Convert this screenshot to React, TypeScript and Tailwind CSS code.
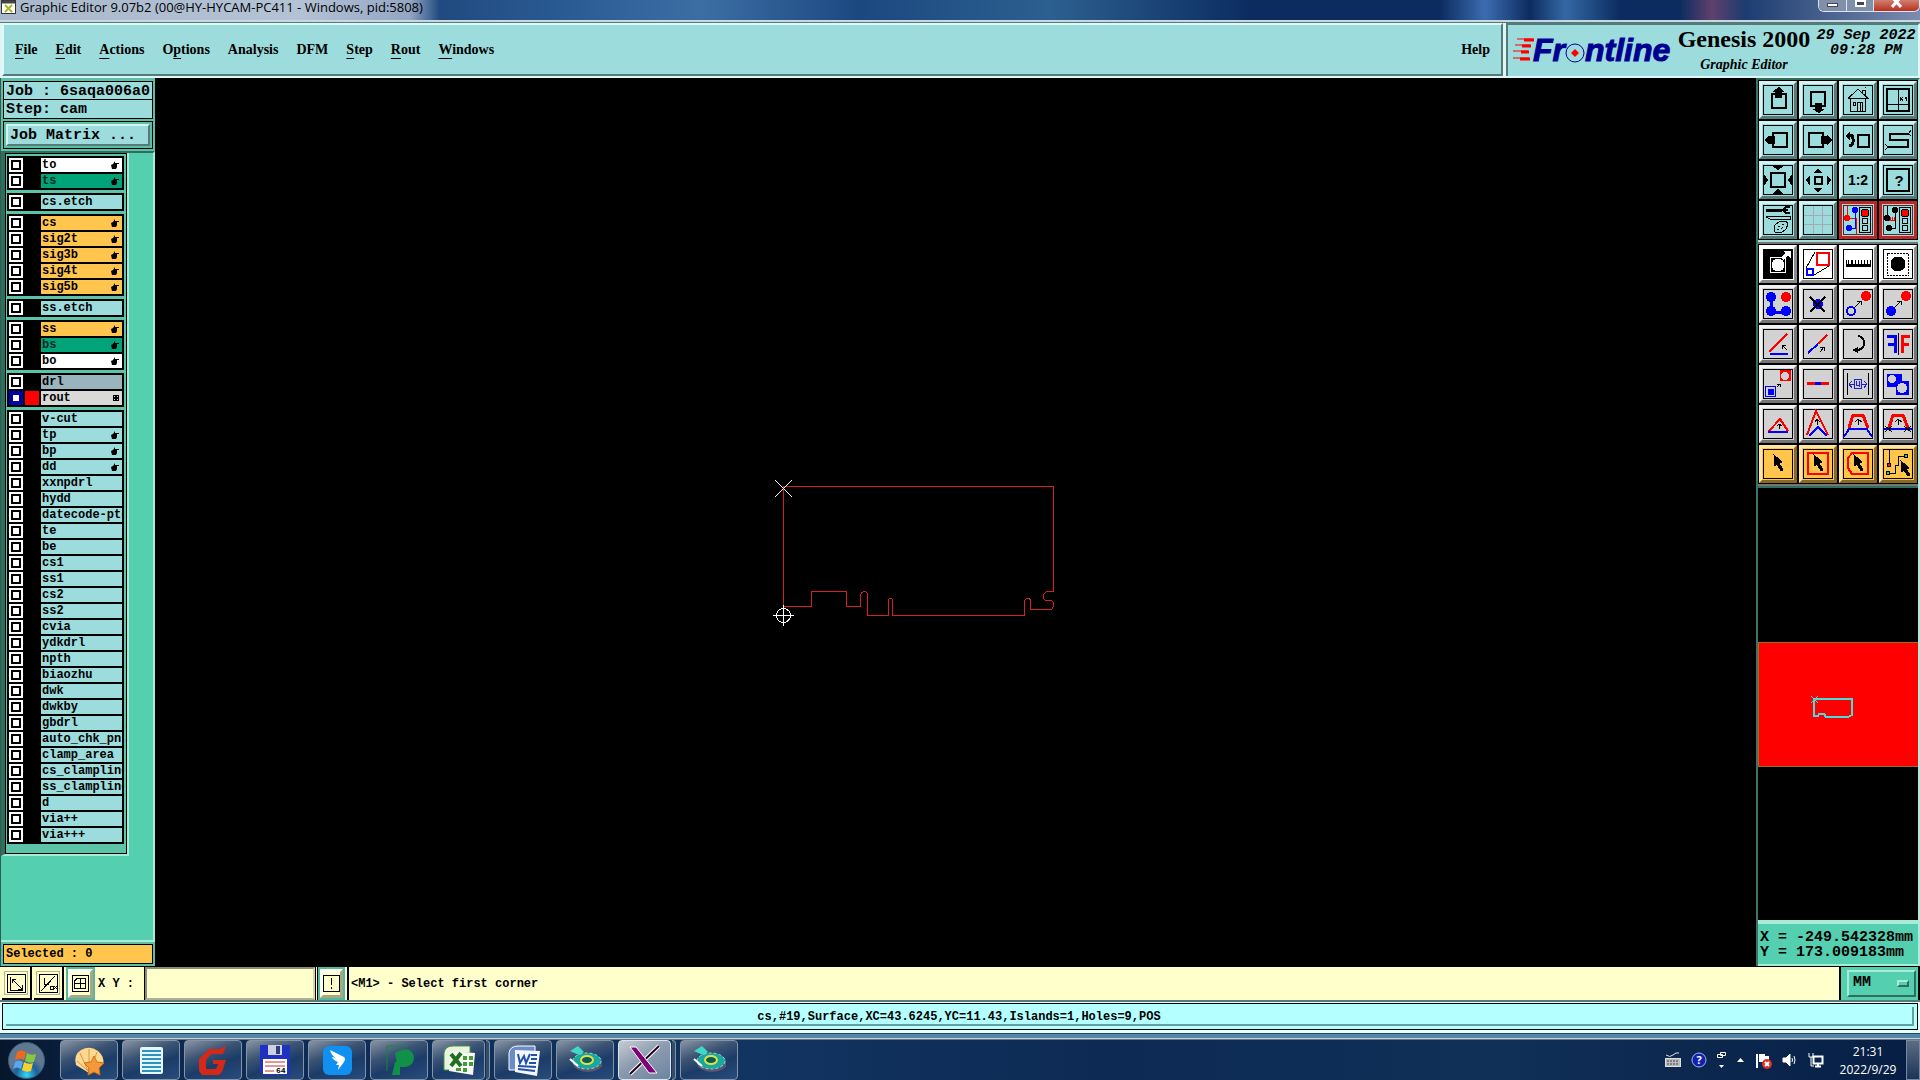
import { ReactNode } from 'react';

type Mark = 'hand' | 'grid';

interface Layer {
  name: string;
  tone: string;
  mark?: Mark;
  active?: boolean;
}

const SKY = 'bg-[#9cdcdc]';
const GOLD = 'bg-[#ffc54c]';
const JADE = 'bg-[#00a478] text-[#06281e]';

const plain = (name: string): Layer => ({ name, tone: SKY });
const handed = (name: string, tone: string): Layer => ({ name, tone, mark: 'hand' });

const layerGroups: Layer[][] = [
  [handed('to', 'bg-white'), handed('ts', JADE)],
  [plain('cs.etch')],
  [handed('cs', GOLD), handed('sig2t', GOLD), handed('sig3b', GOLD), handed('sig4t', GOLD), handed('sig5b', GOLD)],
  [plain('ss.etch')],
  [handed('ss', GOLD), handed('bs', JADE), handed('bo', 'bg-white')],
  [
    { name: 'drl', tone: 'bg-[#9ab4be]' },
    { name: 'rout', tone: 'bg-[#d9d9d9]', mark: 'grid', active: true },
  ],
  [
    plain('v-cut'),
    handed('tp', SKY),
    handed('bp', SKY),
    handed('dd', SKY),
    ...[
      'xxnpdrl', 'hydd', 'datecode-ptc', 'te', 'be', 'cs1', 'ss1', 'cs2', 'ss2', 'cvia', 'ydkdrl', 'npth',
      'biaozhu', 'dwk', 'dwkby', 'gbdrl', 'auto_chk_pnl', 'clamp_area', 'cs_clampline', 'ss_clampline', 'd',
      'via++', 'via+++',
    ].map(plain),
  ],
];

// [before, underlined letter, after]
const menus = [
  ['', 'F', 'ile'],
  ['', 'E', 'dit'],
  ['', 'A', 'ctions'],
  ['O', 'p', 'tions'],
  ['Analysis', '', ''],
  ['DFM', '', ''],
  ['', 'S', 'tep'],
  ['', 'R', 'out'],
  ['', 'W', 'indows'],
];

const RED = '#f00';
const BLUE = '#00f';

interface Tool {
  label: string;
  icon: ReactNode;
  danger?: boolean;
}

const cursor = <path fill="#000" d="M11 6l8 7-3 1 4 7-2 1-4-7-2 2z" />;

const viewTools: Tool[] = [
  { label: 'Pan up', icon: <><rect x="9" y="9" width="14" height="14" strokeWidth="2" /><path fill="#000" stroke="none" d="M16 2l6 5h-3v6h-7V7h-3z" /></> },
  { label: 'Pan down', icon: <><rect x="8" y="7" width="14" height="14" strokeWidth="2" /><path fill="#000" stroke="none" d="M12 18h7v6h3l-6 4-7-4h3z" /></> },
  { label: 'Home', icon: <path d="M5 13.500L15 4l10 9.500H5M7.500 14v12h15V14M10 17h2v3h-2zM14.500 26v-9h5v9M17 18v8M19.500 8V5h3v6M22 3l1-1" /> },
  { label: 'Zoom XY', icon: <><rect x="4" y="4" width="22" height="22" strokeWidth="2" /><path d="M15.500 4v22M4 19.500h22" strokeWidth="1" /><path d="M17 12l3 4M20 12l-3 4M22 12l1 2 1-2M23 14v2" strokeWidth="1" /></> },
  { label: 'Pan left', icon: <><rect x="10" y="8" width="14" height="14" strokeWidth="2" /><path fill="#000" stroke="none" d="M2 15l4-5v1h6v8H6v1z" /></> },
  { label: 'Pan right', icon: <><rect x="6" y="8" width="14" height="14" strokeWidth="2" /><path fill="#000" stroke="none" d="M29 15l-5-5v1h-6v8h6v1z" /></> },
  { label: 'Previous view', icon: <><rect x="15" y="10" width="11" height="12" strokeWidth="2" /><path d="M5 10h2q3 0 3 4v3q0 3-4 4" strokeWidth="3" /><path fill="#000" stroke="none" d="M2 11l5-5v9z" /></> },
  { label: 'Snake', icon: <><path d="M26 9H7v6h18v7H5" strokeWidth="2" /><path d="M26 8l2-3M26 9l2 2M5 22l-3-3M5 22l-3 3" /></> },
  { label: 'Zoom in', icon: <><rect x="8" y="8" width="14" height="14" strokeWidth="2" /><path fill="#000" stroke="none" d="M9 1h12l-6 4zM9 29h12l-6-5zM1 9l4 6-4 6zM29 9l-4 6 4 6z" /></> },
  { label: 'Zoom out', icon: <><rect x="12" y="12" width="7" height="7" strokeWidth="2" /><path fill="#000" stroke="none" d="M10 8l5-4 5 4zM10 23l5 4 5-4zM7 10l-4 5 4 6zM24 10l4 5-4 6z" /></> },
  { label: 'Scale', icon: <text x="15" y="20" textAnchor="middle" stroke="none" fill="#000" className="font-['Liberation_Sans'] text-[14px] font-bold">1:2</text> },
  { label: 'Query', icon: <><rect x="4" y="4" width="22" height="22" strokeWidth="2" /><text x="16" y="21" textAnchor="middle" stroke="none" fill="#000" className="font-['Liberation_Sans'] text-[15px] font-bold">?</text></> },
  { label: 'Setup', icon: <><path d="M3 5h16" strokeWidth="3" /><path d="M27 2h-4l-3 3 3 3h4M25 5h-3" strokeWidth="2" /><path d="M3 12l4-1h20v3H7zM12 20l4-3 7-1 2 3-2 5-5 4-6-1-1-4zM15 21h2M19 19h2M14 24h2M18 24l2-2" /></> },
  { label: 'Grid', icon: <path d="M10.500 1v28M19.500 1v28M1 10.500h28M1 19.500h28" stroke="#a9a9b4" /> },
  {
    label: 'Stop net',
    danger: true,
    icon: <><path d="M4.500 1v12M5 13.500h8.500V29" stroke={RED} /><path d="M12.500 4v19H6" stroke={BLUE} strokeWidth="1" /><circle cx="4" cy="13" r="3" fill={RED} stroke="none" /><circle cx="12" cy="5" r="3" fill={BLUE} stroke="none" /><circle cx="6" cy="23" r="3" fill={BLUE} stroke="none" /><rect x="16.500" y="2.500" width="11" height="25" /><circle cx="22" cy="8" r="4" fill={RED} /><circle cx="22" cy="16" r="3" /><circle cx="22" cy="23" r="3" /></>,
  },
  {
    label: 'Stop drc',
    danger: true,
    icon: <><path d="M4.500 1v12M12.500 4v19H6" strokeWidth="1" /><path d="M5 15.500h7M7 12v3M9 12v3M11 12v3" stroke={RED} /><circle cx="4" cy="13" r="3" fill="#000" stroke="none" /><circle cx="12" cy="5" r="3" fill="#000" stroke="none" /><circle cx="6" cy="23" r="3" fill="#000" stroke="none" /><rect x="16.500" y="2.500" width="11" height="25" /><circle cx="22" cy="8" r="4" fill={RED} /><circle cx="22" cy="16" r="3" /><circle cx="22" cy="23" r="3" /></>,
  },
];

const whiteTools: Tool[] = [
  { label: 'Select feature', icon: <><path fill="#000" d="M1 1h28v28H1z" /><rect x="7.500" y="8.500" width="15" height="15" stroke="#fff" /><circle cx="15" cy="16" r="6" fill="#fff" stroke="#fff" /><path d="M19 10l6-6" stroke="#fff" strokeWidth="4" /><path fill="#fff" stroke="none" d="M20 2h8v8z" /></> },
  { label: 'Scale feature', icon: <><rect x="14" y="4" width="12" height="12" stroke={RED} strokeWidth="2" /><rect x="4" y="20" width="6" height="6" stroke={BLUE} strokeWidth="2" /><path d="M3 19L12 3M11 26l15-9" /></> },
  { label: 'Measure', icon: <path fill="#000" stroke="none" d="M3 18h25v-7h-1v4h-2v-4h-1v4h-2v-4h-1v4h-2v-4h-1v4h-2v-4h-1v4h-2v-4h-1v4h-2v-4h-1v4H9v-4H8v4H6v-4H5v4H4v-4H3z" /> },
  { label: 'Add pad', icon: <><rect x="4.500" y="4.500" width="21" height="22" strokeDasharray="2 1" /><circle cx="15" cy="15" r="7" fill="#000" /></> },
];

const editTools: Tool[] = [
  { label: 'Copy chain', icon: <><path d="M8 8v15h15" stroke={BLUE} strokeWidth="3" /><g stroke="none" fill={BLUE}><circle cx="8" cy="8" r="5" /><circle cx="8" cy="22" r="5" /><circle cx="23" cy="22" r="5" /></g><circle cx="23" cy="8" r="5" fill={RED} stroke="none" /></> },
  { label: 'Delete', icon: <><circle cx="15" cy="15" r="5" fill={BLUE} stroke="none" /><path d="M7 8l15 15M22 8L7 23" strokeWidth="2" /></> },
  { label: 'Move', icon: <><circle cx="23" cy="7" r="5" fill={RED} stroke="none" /><circle cx="8" cy="22" r="4" stroke={BLUE} strokeWidth="2" /><path d="M12 18l6-6M14 12h4v4" /></> },
  { label: 'Copy', icon: <><circle cx="23" cy="7" r="5" fill={RED} stroke="none" /><circle cx="8" cy="22" r="5" fill={BLUE} stroke="none" /><path d="M12 18l6-6M14 12h4v4" /></> },
  { label: 'Rotate line', icon: <><path d="M6 23L24 5" stroke={RED} strokeWidth="2" /><path d="M7 25h18" stroke={BLUE} strokeWidth="2" /><path d="M24 21l-5-5M19 20v-4h4" /></> },
  { label: 'Extend line', icon: <><path d="M5 24l10-9" stroke={BLUE} strokeWidth="2" /><path d="M15 15l9-9" stroke={RED} strokeWidth="2" /><path d="M17 23l4-5M17 18h4v4" /></> },
  { label: 'Rotate', icon: <><path d="M15 7q6 1 6 7t-6 7h-2" strokeWidth="2" /><path fill="#000" stroke="none" d="M9 21l6-3v6z" /></> },
  { label: 'Mirror', icon: <><path d="M4 7h8v17M5 15h7" stroke={BLUE} strokeWidth="3" /><path d="M27 7h-8v17M26 15h-7" stroke={RED} strokeWidth="3" /><path d="M15.500 4v22" /></> },
  { label: 'Resize', icon: <><path fill={RED} stroke="none" d="M17 1h11v11H17z" /><circle cx="22" cy="7" r="4" fill="#d2d2d2" stroke="none" /><rect x="2.500" y="17.500" width="10" height="10" stroke={BLUE} strokeWidth="1" fill="#d2d2d2" /><circle cx="8" cy="23" r="3" fill={BLUE} stroke={BLUE} /><path d="M14 18l3-3M14 15h3v3" /></> },
  { label: 'Break line', icon: <><path d="M4 14.500h22" stroke={RED} strokeWidth="3" /><path d="M12 14.500h6" stroke={BLUE} strokeWidth="3" /></> },
  { label: 'Spacing', icon: <><path d="M4.500 4v22M25.500 4v22" /><path d="M6 15.500h18M9 12l-3 3 3 4M21 12l3 3-3 4" stroke="#22c" /><path d="M11.500 10.500h7v9h-7z" fill="#d2d2d2" stroke="#22c" /><path d="M13.500 12v4h3M16.500 12v6" stroke="#22c" /></> },
  { label: 'Merge', icon: <><path fill={BLUE} stroke="none" d="M4 5h15v7h7v14H13v-8H4z" /><circle cx="9" cy="10" r="4" fill="#d2d2d2" stroke="none" /><circle cx="19" cy="19" r="5" fill="#d2d2d2" stroke="none" /></> },
  { label: 'Corner', icon: <><path d="M6 22L17 10l8 12" stroke={RED} strokeWidth="2" /><path d="M5 23h20" stroke={BLUE} strokeWidth="2" /><path d="M16.500 20v-5M14 17l2-2 3 2" /></> },
  { label: 'Sharp corner', icon: <><path d="M4 26L13 2l12 24" stroke={RED} strokeWidth="2" /><path d="M6 27l9-9 9 9" stroke={BLUE} strokeWidth="2" /><path d="M14.500 16v-6M12 13l2-3 3 3" /></> },
  { label: 'Chamfer', icon: <><path d="M6 19l4-13h10l5 13" stroke={RED} strokeWidth="3" /><path d="M1 28l5-8h18l5 8" stroke={BLUE} strokeWidth="2" /><path d="M15.500 16v-6M12 13l3-3 4 3" /></> },
  { label: 'Trim chamfer', icon: <><path d="M6 19l4-13h10l5 13" stroke={RED} strokeWidth="3" /><path d="M1 20h28" stroke={BLUE} strokeWidth="2" /><path d="M15.500 16v-6M12 13l3-3 4 3M2 17l7 6M9 17l-7 6M21 17l7 6M28 17l-7 6" /></> },
];

const pickTools: Tool[] = [
  { label: 'Pick', icon: cursor },
  { label: 'Pick in frame', icon: <><rect x="5" y="4" width="20" height="21" stroke={RED} strokeWidth="2" />{cursor}</> },
  { label: 'Pick in polygon', icon: <><path d="M9 4h16v21H9l-4-6V9z" stroke={RED} strokeWidth="2" />{cursor}</> },
  { label: 'Pick net', icon: <><path d="M6.500 1v13M6 24.500h6.500v-8h3v-9H23" /><circle cx="6" cy="16" r="2" fill="#d22" /><circle cx="5" cy="24" r="2" fill="#3d3" /><circle cx="23" cy="7" r="2" fill="#3d3" /><path fill="#000" d="M18 12l8 7-3 1 4 6-2 1-4-6-2 2z" /></> },
];

const toneClasses = {
  sky: 'border-t-[#d2f4f4] border-l-[#d2f4f4] border-r-[#547a7a] border-b-[#547a7a] bg-[#9cdcdc]',
  red: 'border-[#b82828] bg-[#9cdcdc]',
  white: 'border-t-white border-l-white border-r-[#8c8c8c] border-b-[#8c8c8c] bg-white',
  grey: 'border-t-[#f2f2f2] border-l-[#f2f2f2] border-r-[#757575] border-b-[#757575] bg-[#d2d2d2]',
  gold: 'border-t-[#ffe6a0] border-l-[#ffe6a0] border-r-[#8a6a20] border-b-[#8a6a20] bg-[#ffc54c]',
};

function ToolGrid({ tools, tone }: { tools: Tool[]; tone: keyof typeof toneClasses }) {
  return (
    <div className="grid grid-cols-4 gap-[2px] bg-black p-px">
      {tools.map((tool) => (
        <button
          key={tool.label}
          aria-label={tool.label}
          className={`flex h-[38px] items-center justify-center border-3 ${toneClasses[tool.danger ? 'red' : tone]}`}
        >
          <svg width="30" height="30" viewBox="0 0 30 30" fill="none" stroke="#000" shapeRendering="crispEdges" className="overflow-visible">
            <rect x="0.500" y="0.500" width="29" height="29" stroke={tool.danger ? '#7c1818' : '#000'} />
            {tool.icon}
          </svg>
        </button>
      ))}
    </div>
  );
}

function LayerMark({ mark }: { mark: Mark }) {
  if (mark === 'grid') {
    return (
      <svg width="6" height="6" viewBox="0 0 6 6" shapeRendering="crispEdges">
        <path d="M0 0h6v6H0z" />
        <path fill="#d9d9d9" d="M1 1h1v1H1zM4 1h1v1H4zM1 4h1v1H1zM4 4h1v1H4z" />
      </svg>
    );
  }
  return (
    <svg width="8" height="8" viewBox="0 0 8 8" fill="#000">
      <path d="M0 4l2-1 2-3v2h4v1H6v3L5 8H1z" />
    </svg>
  );
}

function LayerRow({ layer }: { layer: Layer }) {
  return (
    <label className="flex h-[14px] items-stretch">
      <input
        type="checkbox"
        defaultChecked={layer.active}
        className="size-[14px] shrink-0 appearance-none bg-white shadow-[inset_0_0_0_2px_#fff,inset_0_0_0_4px_#000] checked:shadow-[inset_0_0_0_4px_#0000a8]"
      />
      <span className={`mx-[2px] w-[14px] shrink-0 ${layer.active ? 'bg-[#f00]' : 'bg-black'}`} />
      <span className={`flex min-w-0 flex-1 items-center overflow-hidden pl-px text-[12px] leading-[14px] ${layer.tone}`}>
        <span className="flex-1 whitespace-nowrap">{layer.name}</span>
        {layer.mark && <span className="pr-[3px]"><LayerMark mark={layer.mark} /></span>}
      </span>
    </label>
  );
}

function Sidebar() {
  return (
    <aside className="flex w-[155px] shrink-0 flex-col border-l border-[#2d5c50] bg-[#5cbfa6] px-[2px] pt-[3px]">
      <div className="divide-y divide-black border border-black bg-[#9cdcdc] text-[15px]">
        <p className="h-[18px] overflow-hidden pl-[2px] leading-[19px] whitespace-nowrap">Job : 6saqa006a0</p>
        <p className="h-[18px] pl-[2px] leading-[20px]">Step: cam</p>
      </div>
      <div className="mt-[2px] border border-black p-[2px]">
        <button className="block h-[22px] w-full border-2 border-t-[#d2f4f4] border-r-[#547a7a] border-b-[#547a7a] border-l-[#d2f4f4] bg-[#9cdcdc] pl-[2px] text-left text-[15px] leading-[20px]">
          Job Matrix ...
        </button>
      </div>

      <div className="-mx-[2px] mt-[2px] flex-1 border-t-2 border-r-2 border-b-2 border-t-[#2d6e5c] border-r-[#a8ecd8] border-b-[#a8ecd8] bg-[#54cfb0]">
        <div className="w-[128px] border-r-2 border-b-2 border-l-4 border-r-[#a8ecd8] border-b-[#a8ecd8] border-l-[#2d6e5c]">
          <div className="space-y-[3px] border border-black bg-[#5cc4a8] pt-[2px] pr-[2px] pb-[9px] pl-px">
            {layerGroups.map((group) => (
              <div key={group[0].name} className="space-y-[2px] bg-black p-[2px]">
                {group.map((layer) => (
                  <LayerRow key={layer.name} layer={layer} />
                ))}
              </div>
            ))}
          </div>
        </div>
      </div>

      <p className="my-[2px] h-[20px] border border-black bg-[#ffc54c] pl-[2px] text-[12px] leading-[18px]">Selected : 0</p>
    </aside>
  );
}

function Drawing() {
  return (
    <main className="min-w-0 flex-1 bg-black">
      <svg viewBox="155 78 1601 888" className="h-full w-full" fill="none" shapeRendering="crispEdges">
        <path
          stroke="#d42020"
          d="M783.500 486.500H1053.500V591.500H1047.500Q1043.500 592.500 1043.500 596.500T1047.500 600.500H1051.500Q1053.500 601.500 1053.500 604.500T1051.500 609.500H1030.500V600.500Q1030.500 598.500 1027.500 598.500T1024.500 601.500V615.500H892.500V600.500Q892.500 598.500 890.500 598.500T888.500 600.500V615.500H867.500V594.500Q867.500 591.500 864.500 591.500T860.500 595.500V606.500H846.500V591.500H811.500V606.500H783.500Z"
        />
        <g stroke="#fff">
          <path d="M775 480l17 17M792 480l-17 17" />
          <path d="M773 615.500h21M783.500 605v21" />
          <circle cx="783.500" cy="615.500" r="7" />
        </g>
      </svg>
    </main>
  );
}

function ToolPanel() {
  return (
    <aside className="flex w-[164px] shrink-0 flex-col border-t-2 border-r-2 border-l-2 border-t-[#2d6e5c] border-r-[#b4e8dc] border-l-[#3c7466] bg-black">
      <ToolGrid tools={viewTools} tone="sky" />
      <div className="h-[4px] border-t-2 border-b-2 border-t-[#a8dcd4] border-b-[#757575]" />
      <ToolGrid tools={whiteTools} tone="white" />
      <ToolGrid tools={editTools} tone="grey" />
      <ToolGrid tools={pickTools} tone="gold" />
      <div className="h-[4px] border-t-2 border-b-2 border-t-[#757575] border-b-[#2d6e5c]" />
      <div className="min-h-0 flex-1">
        <svg viewBox="0 0 160 432" className="h-full w-full" fill="none" shapeRendering="crispEdges">
          <rect x="0" y="154" width="160" height="125" fill="#f00" />
          <path d="M0 154.500h160M0 278.500h160M0.500 154v125" stroke="#a07010" />
          <path d="M56 211h38v16l-4 2H68l-2-3h-5l-1 2h-4z" stroke="#48dcdc" strokeWidth="2" />
          <path d="M53 208l7 7M60 208l-7 7" stroke="#48dcdc" />
        </svg>
      </div>
      <dl className="h-[46px] border-t-4 border-b-2 border-t-[#a8ecd8] border-b-[#a8ecd8] bg-[#54cfb0] pt-[6px] pl-[2px] text-[15px] leading-[15px] whitespace-pre">
        <div className="flex"><dt>X = </dt><dd>-249.542328mm</dd></div>
        <div className="flex"><dt>Y = </dt><dd>173.009183mm</dd></div>
      </dl>
    </aside>
  );
}

function Logo() {
  return (
    <svg width="162" height="34" viewBox="0 0 162 34" aria-label="Frontline">
      <g fill="none" stroke="#f00" strokeWidth="2">
        <path d="M5 6h16M3 12h15M1 18h15M1 25h16" strokeWidth="1" />
        <path d="M12 7h10M10 13h9M9 19h8M8 26h10" strokeWidth="3" />
      </g>
      <g fill="#000090" stroke="#000090" className="font-['Liberation_Sans'] text-[32px] font-bold italic">
        <text x="21" y="28">Fr</text>
        <text x="73" y="28">ntline</text>
      </g>
      <circle cx="63" cy="20" r="9" fill="#9cdcdc" stroke="#000096" strokeWidth="1" />
      <path d="M63 16l4 4-4 4-4-4z" fill="#f00" />
    </svg>
  );
}

function Header() {
  return (
    <header className="flex h-[55px] shrink-0 bg-[#dff6f6] pb-[2px]">
      <nav className="ml-[2px] flex flex-1 items-center gap-[18px] border-2 border-t-[#dff8f8] border-r-[#547a7a] border-b-[#547a7a] border-l-[#dff8f8] bg-[#9cdcdc] px-[11px] font-['Liberation_Serif'] text-[14px] font-bold">
        {menus.map(([before, key, after]) => (
          <button key={before + key + after}>
            {before}
            <span className="underline underline-offset-4">{key}</span>
            {after}
          </button>
        ))}
        <button className="ml-auto">Help</button>
      </nav>
      <div className="ml-[3px] flex w-[414px] shrink-0 border-t-2 border-r-2 border-l-2 border-t-[#547a7a] border-r-[#dff8f8] border-l-[#547a7a] bg-[#9cdcdc] pl-[4px]">
        <div className="pt-[8px]"><Logo /></div>
        <div className="w-[140px] shrink-0 text-center font-['Liberation_Serif'] font-bold whitespace-nowrap">
          <h1 className="text-[24px] leading-[28px]">Genesis 2000</h1>
          <p className="text-[14px] leading-[24px] italic">Graphic Editor</p>
        </div>
        <time className="flex-1 pt-[3px] text-center text-[15px] leading-[15px] font-bold whitespace-nowrap italic">
          29 Sep 2022
          <br />
          09:28 PM
        </time>
      </div>
    </header>
  );
}

function TitleBar() {
  return (
    <div className="flex h-[22px] shrink-0 justify-between border-b-2 border-b-[#c8d8e0] bg-[linear-gradient(90deg,#aab8cc_0px,#b4c2d6_300px,#93a6c2_410px,#204a80_440px,#2a5a92_560px,#3c6ea4_700px,#1c4880_860px,#2c6090_1050px,#0c2c60_1250px,#0c2c60_1440px,#3c6cb0_1485px,#0c2c60_1530px,#3468a4_1565px,#0c2c60_1620px,#0c2c60_1680px,#60406c_1712px,#1c3c70_1745px,#7c8cb0_100%)] pl-[1px] font-['Open_Sans']">
      <div className="flex items-start gap-[4px]">
        <svg width="15" height="14" viewBox="0 0 15 14" className="shrink-0">
          <rect x="0.500" y="0.500" width="14" height="13" fill="#fff" stroke="#333" />
          <path d="M1 2h13" stroke="#444" strokeWidth="3" />
          <path d="M4 5l7 7M11 5l-7 7" stroke="#a8b820" strokeWidth="2" />
        </svg>
        <span className="text-[13px] leading-[14px] whitespace-nowrap">
          Graphic Editor 9.07b2 (00@HY-HYCAM-PC411 - Windows, pid:5808)
        </span>
      </div>
      <div className="flex h-[12px] overflow-hidden rounded-b-md border border-t-0 border-[#dbe4f0] text-white">
        <button aria-label="Minimize" className="flex w-[28px] items-end justify-center border-r border-[#dbe4f0] bg-[#8090a8] pb-[4px]">
          <span className="h-[4px] w-[11px] border border-[#445] bg-white" />
        </button>
        <button aria-label="Restore" className="flex w-[27px] justify-center border-r border-[#dbe4f0] bg-[#8090a8]">
          <span className="h-[7px] w-[11px] border-2 border-white bg-[#445]" />
        </button>
        <button aria-label="Close" className="flex w-[45px] justify-center bg-[linear-gradient(#d08070,#b83020)]">
          <svg width="11" height="8" viewBox="0 0 11 8"><path d="M1 -3l9 10M10 -3L1 7" stroke="#fff" strokeWidth="3" /></svg>
        </button>
      </div>
    </div>
  );
}

const creamBevel = 'border-t-[#fffff0] border-l-[#fffff0] border-r-[#a8a884] border-b-[#a8a884] bg-[#ffffcc]';

function CommandBar() {
  return (
    <div className="flex h-[33px] shrink-0 gap-[2px] bg-[#ffffcc] pl-[2px] text-[12px]">
      <button aria-label="Absolute" className="flex w-[30px] items-center justify-center border-r-2 border-b-2 border-black">
        <svg width="24" height="24" viewBox="0 0 24 24" fill="none" stroke="#000" shapeRendering="crispEdges">
          <rect x="0.500" y="0.500" width="23" height="23" stroke="#b4b494" />
          <path d="M3.500 3.500h18v18h-18zM6.500 6v13H19M8 8l10 10M8 12V8h4M18 14v4h-4" />
        </svg>
      </button>
      <button aria-label="Relative" className="flex w-[30px] items-center justify-center border-r-2 border-b-2 border-black">
        <svg width="24" height="24" viewBox="0 0 24 24" fill="none" stroke="#000" shapeRendering="crispEdges">
          <rect x="0.500" y="0.500" width="23" height="23" stroke="#b4b494" />
          <path d="M3.500 3.500h18v18h-18zM5 20L19 5M8.500 7v6h4M14 15h3v3h-3zM18 15l3 3M21 15l-3 3" />
        </svg>
      </button>
      <div className="bg-[#54b8a0] p-[2px]">
        <button aria-label="Snap grid" className={`flex h-full w-[25px] items-center justify-center border-3 ${creamBevel}`}>
          <svg width="17" height="17" viewBox="0 0 17 17" fill="none" stroke="#000" shapeRendering="crispEdges">
            <path d="M0.500 0.500h16v16H0.500zM5.500 3h8v10H2.500V6zM8.500 3v11M2 8.500h12" />
          </svg>
        </button>
      </div>
      <label htmlFor="xy" className="w-[46px] self-center pl-px">X Y :</label>
      <input id="xy" className="w-[170px] border-2 border-t-[#8c8c70] border-r-[#d8d8b0] border-b-[#b0b090] border-l-[#8c8c70] bg-[#ffffcc] px-[6px] outline outline-black" />
      <div className="border-l border-black bg-[#54b8a0] p-[2px]">
        <button aria-label="Alert" className={`flex h-full w-[23px] items-center justify-center border-3 ${creamBevel}`}>
          <svg width="17" height="17" viewBox="0 0 17 17" fill="none" stroke="#000" shapeRendering="crispEdges">
            <path d="M0.500 0.500h16v16H0.500z" />
            <path d="M8.500 3v7M8.500 12v2" strokeWidth="1" />
          </svg>
        </button>
      </div>
      <p className="flex-1 border-l-2 border-black pl-[2px] leading-[34px]">&lt;M1&gt; - Select first corner</p>
      <div className="flex w-[81px] items-center border-r-2 border-l-2 border-black bg-[#54cfb0] pl-[6px]">
        <div className="flex h-[27px] w-[69px] items-center border-2 border-t-[#a8ecd8] border-r-[#2d6e5c] border-b-[#2d6e5c] border-l-[#a8ecd8] pr-[5px]">
          <select aria-label="Units" className="w-full appearance-none pl-[4px] text-[15px] font-bold">
            <option>MM</option>
            <option>Inch</option>
          </select>
          <span className="h-[7px] w-[12px] shrink-0 border-2 border-t-[#a8ecd8] border-r-[#2d6e5c] border-b-[#2d6e5c] border-l-[#a8ecd8]" />
        </div>
      </div>
    </div>
  );
}

const gear = (
  <>
    <ellipse cx="19" cy="19" rx="15" ry="9" fill="#5c5470" />
    <ellipse cx="18" cy="17" rx="14" ry="8" fill="#18a8a0" stroke="#90d8d0" strokeDasharray="3 2" />
    <ellipse cx="18" cy="16" rx="6" ry="4" fill="#0a5c58" stroke="#e0e040" strokeWidth="2" />
    <path d="M1 7l8-5 6 6-5 3z" fill="#40d8c8" />
    <path d="M1 15l8 7" stroke="#fff" strokeWidth="2" />
  </>
);

const apps: { name: string; icon: ReactNode; stacked?: boolean; active?: boolean }[] = [
  {
    name: 'Shell',
    icon: <><path d="M16 29L3 21Q0 11 8 6q9-5 17 1 7 6 5 13z" fill="#fcd890" /><path d="M15 27L4 17M15 27L7 9M16 27V5M17 27l7-19" stroke="#d89840" /><path d="M21 12l3 6 7 1-5 5 1 7-6-3-6 3 1-7-5-5 7-1z" fill="#f49838" stroke="#d07018" /></>,
  },
  {
    name: 'Notepad',
    icon: <><rect x="5" y="3" width="23" height="27" rx="2" fill="#e4f6fc" /><path d="M7 7h19M7 11h19M7 15h19M7 19h19M7 23h19M7 27h19" stroke="#2c94bc" strokeWidth="2" /></>,
  },
  { name: 'Genesis', icon: <path d="M29 2l-3 8H14l-5 6v9h10l2-5h-5v-4h13l-4 12-3 3H5l-3-4V15L12 5h10z" fill="#d42818" /> },
  {
    name: 'Save',
    icon: <><path d="M1 1h30v30H4l-3-3z" fill="#2030c0" /><path d="M9 1h14v10H9z" fill="#ccd0e0" /><path d="M17 2h4v8h-4z" fill="#303c80" /><path d="M4 15h24v15H4z" fill="#fff" /><path d="M6 18h20M6 22h20M6 27h9" stroke="#c03030" /><text x="17" y="29" className="font-['Liberation_Mono'] text-[8px] font-bold">64</text></>,
  },
  { name: 'DingTalk', icon: <><rect x="2" y="2" width="29" height="29" rx="6" fill="#1090f0" /><path d="M9 6l14 7q2 2 0 5l-6 8 1-5h-3l2-3q-5-2-6-5l4 1q-5-3-6-8z" fill="#fff" /></> },
  { name: 'Plot', icon: <><path d="M4 27V2h18" fill="none" stroke="#108840" /><path d="M12 9q16-9 19 4 0 11-14 10v8H9l3-13h6v2h-4M13 12h6M13 15h6" fill="#109048" /></> },
  {
    name: 'Excel',
    stacked: true,
    icon: <><path d="M2 26V9Q3 2 11 2h17v7H10v17z" fill="#e8f4e0" stroke="#48983c" /><path d="M8 7l25 2-2 22-24-4z" fill="#f4f8f0" /><path d="M21 12h4v4h-4zM27 12h4v4h-4zM21 18h4v4h-4zM27 18h4v4h-4zM21 24h4v4h-4zM14 24h5v3h-5z" fill="#48983c" /><path d="M9 10l10 12M19 9L9 22" stroke="#207020" strokeWidth="4" /></>,
  },
  {
    name: 'Word',
    icon: <><path d="M2 26V9Q3 2 11 2h17v7H10v17z" fill="#6c8cc8" stroke="#fff" /><path d="M8 6l25 1-3 25-22-4z" fill="#f4f8ff" /><path d="M11 10l2 9 4-7 2 7 4-9" fill="none" stroke="#2450a8" strokeWidth="2" /><path d="M24 11h6M24 15h6M22 19h7M11 22l18 1M11 25l17 2" stroke="#2450a8" strokeWidth="2" /></>,
  },
  { name: 'Engineering Toolkit', icon: gear },
  {
    name: 'Graphic Editor',
    stacked: true,
    active: true,
    icon: <><path d="M31 2L2 30" stroke="#fff" strokeWidth="4" /><path d="M31 2L2 30" stroke="#202" strokeWidth="2" /><path d="M2 3h6l21 26h-8z" fill="#800078" stroke="#fff" /></>,
  },
  { name: 'Input', icon: gear },
];

function Taskbar() {
  return (
    <footer className="flex h-[41px] shrink-0 items-stretch border-t border-[#64788c] bg-[linear-gradient(90deg,#06172c_0px,#0c2850_140px,#123460_760px,#0c2a54_1100px,#103058_1500px,#071e44_100%)] font-['Open_Sans'] text-white">
      <button aria-label="Start" className="mr-[15px] ml-[8px] self-center">
        <svg width="37" height="37" viewBox="0 0 37 37">
          <defs>
            <radialGradient id="orb" cy="0.900">
              <stop offset="0" stopColor="#30d8f8" />
              <stop offset="0.600" stopColor="#1c6098" />
              <stop offset="1" stopColor="#607890" />
            </radialGradient>
          </defs>
          <circle cx="18.500" cy="18.500" r="18" fill="url(#orb)" stroke="#3c5c7c" />
          <path d="M9 10q5-3 9 0l-2 8q-4-3-9 0z" fill="#f06820" />
          <path d="M19 11q4 3 9 1l-2 8q-5 2-9-1z" fill="#88c840" />
          <path d="M7 20q4-3 8 0l-2 7q-4-3-8 0z" fill="#58a8f0" />
          <path d="M16 20q5 3 9 1l-2 8q-5 2-9-1z" fill="#f8d030" />
        </svg>
      </button>
      <div className="flex gap-[4px]">
        {apps.map((app) => (
          <div key={app.name} className="flex w-[58px] gap-px">
            <button
              aria-label={app.name}
              className={`flex min-w-0 flex-1 items-center justify-center rounded-sm border ${
                app.active
                  ? 'border-[#dce4ee] bg-[linear-gradient(150deg,#c8ccd4,#8c9cb0_45%,#6c84a0)]'
                  : 'border-[#8494a8] bg-[linear-gradient(160deg,#8894a4,#3c5474_35%,#1c3c68_60%,#284c7c)]'
              }`}
            >
              <svg width="33" height="33" viewBox="0 0 33 33">{app.icon}</svg>
            </button>
            {app.stacked && <span className="w-[4px] rounded-r-sm border border-l-0 border-[#8494a8] bg-[#344c6c]" />}
          </div>
        ))}
      </div>

      <div className="mr-[6px] ml-auto flex items-center gap-[10px]">
        <svg width="16" height="16" viewBox="0 0 16 16" fill="none" stroke="#ddd">
          <path d="M1 3q4 3 7 0t6-2" />
          <rect x="0.500" y="6.500" width="15" height="8" fill="#bbb" />
          <path d="M2 9h12M2 12h12" stroke="#444" strokeDasharray="2 1" />
        </svg>
        <svg width="16" height="16" viewBox="0 0 16 16">
          <circle cx="8" cy="8" r="7" fill="#1020b0" stroke="#a8b4e8" />
          <text x="8" y="12" textAnchor="middle" fill="#fff" className="text-[11px] font-bold">?</text>
        </svg>
        <svg width="9" height="18" viewBox="0 0 9 18" fill="none" stroke="#fff">
          <path d="M3.500 1.500h5v3h-5zM0.500 3.500h5v3h-5z" />
          <path d="M2 14h5l-2.500 3z" fill="#fff" stroke="none" />
        </svg>
        <svg width="9" height="6" viewBox="0 0 9 6" fill="#fff"><path d="M1 5l3.500-4L8 5z" /></svg>
        <svg width="17" height="17" viewBox="0 0 17 17">
          <path d="M2 2v14" stroke="#fff" strokeWidth="2" />
          <path d="M4 2h6v2h4v6H4z" fill="#fff" />
          <circle cx="12" cy="12" r="5" fill="#d83028" />
          <path d="M10 10l4 4M14 10l-4 4" stroke="#fff" strokeWidth="2" />
        </svg>
        <svg width="16" height="16" viewBox="0 0 16 16" fill="none" stroke="#fff">
          <path d="M1 6h3l4-4v12l-4-4H1z" fill="#fff" />
          <path d="M10 6q1 2 0 4M12 4q2 4 0 8" />
        </svg>
        <svg width="16" height="16" viewBox="0 0 16 16" fill="none" stroke="#fff">
          <path d="M5.500 4.500h9v7h-9zM7 14.500h6M10 12v2" strokeWidth="2" />
          <path d="M1 1v4h4V1M3 5v9h3" />
        </svg>
      </div>
      <time className="w-[76px] self-center pt-px text-center text-[12px] leading-[18px]">
        21:31
        <br />
        2022/9/29
      </time>
      <button aria-label="Show desktop" className="w-[14px] border border-[#7888a0] bg-[linear-gradient(#5c6c84,#1c3458)]" />
    </footer>
  );
}

export default function App() {
  return (
    <div className="flex h-screen flex-col overflow-hidden bg-black font-['Liberation_Mono',monospace] font-bold text-black">
      <div className="contents font-normal"><TitleBar /></div>
      <div className="h-px shrink-0 bg-[#547a7a]" />
      <Header />
      <div className="flex min-h-0 flex-1">
        <Sidebar />
        <Drawing />
        <ToolPanel />
      </div>
      <div className="h-px shrink-0 bg-black" />
      <CommandBar />
      <div className="shrink-0 border-t-2 border-t-[#547a7a] bg-[#e4ffff] px-[2px] pt-px pb-[3px]">
        <p className="h-[27px] border border-black bg-[#b4ffff] p-[3px] text-center text-[12px]">
          <span className="block h-[19px] border-r-2 border-b-2 border-[#64a0a0] leading-[20px]">
            cs,#19,Surface,XC=43.6245,YC=11.43,Islands=1,Holes=9,POS
          </span>
        </p>
      </div>
      <div className="h-[6px] shrink-0 border-t border-b border-t-[#24485c] border-b-[#c0d4e0] bg-[#5888a8]" />
      <div className="contents font-normal"><Taskbar /></div>
    </div>
  );
}
